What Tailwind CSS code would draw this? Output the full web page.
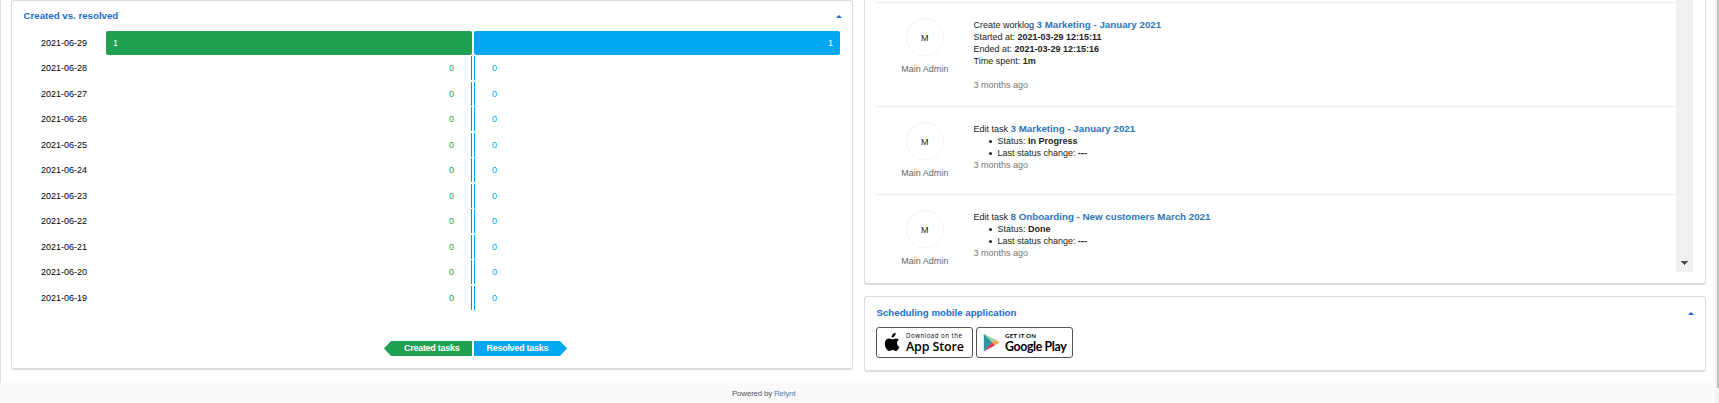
<!DOCTYPE html>
<html lang="en">
<head>
<meta charset="utf-8">
<title>Dashboard</title>
<script src="https://cdn.jsdelivr.net/npm/@tailwindcss/browser@4"></script>
</head>
<body class="h-[403px] overflow-hidden bg-white font-['Liberation_Sans',Arial,sans-serif] text-[9px] leading-3 text-[#222]">
<div class="flex h-[403px]">
  <div class="flex w-[1715px] flex-col">
    <main class="flex h-[383px] gap-[11px] border-l border-[#ddd] pl-[10px]">
      <section class="flex h-[370px] w-[842px] flex-col rounded-[3px] border border-b-2 border-[#ddd] px-3">
        <header class="flex h-[29.5px] items-center justify-between">
          <h2 class="-ml-[0.5px] text-[9.7px] font-bold text-[#1a6dcc]">Created vs. resolved</h2>
          <svg class="-mr-[2px] mt-[2px] h-[3px] w-[6px]" viewBox="0 0 6 3"><path d="M0 3 3 0l3 3z" fill="#1a6dcc"/></svg>
        </header>
        <div id="chart" class="flex flex-col gap-[1.5px] text-black"></div>
        <div class="mt-[31.5px] flex h-[15px] gap-[2px] pl-[360px] font-bold leading-[14px] tracking-[-0.28px] text-white">
          <div class="w-[88px] bg-[#1fa14f] pl-[20px] [clip-path:polygon(0_50%,7px_0,100%_0,100%_100%,7px_100%)]">Created tasks</div>
          <div class="w-[93px] bg-[#02a7f2] pl-[12.5px] [clip-path:polygon(0_0,86px_0,100%_50%,86px_100%,0_100%)]">Resolved tasks</div>
        </div>
      </section>

      <div class="flex w-[842px] flex-col gap-[11px]">
        <section class="flex h-[285px] rounded-b-[3px] border-x border-b-2 border-[#ddd] pl-[11px]">
          <div class="w-[800px] pt-[2px]">
            <article class="flex h-[104px] border-t border-[#eee] pt-[15px]">
              <div class="flex w-[97.5px] flex-col items-center">
                <div class="flex h-[38px] w-[38px] items-center justify-center rounded-full border border-[#f3f3f3] pt-px">M</div>
                <div class="mt-[7px] text-[#666]">Main Admin</div>
              </div>
              <div class="pt-px">
                <div>Create worklog <b class="text-[9.75px] text-[#2e75b6]">3 Marketing - January 2021</b></div>
                <div>Started at: <b>2021-03-29 12:15:11</b></div>
                <div>Ended at: <b>2021-03-29 12:15:16</b></div>
                <div>Time spent: <b>1m</b></div>
                <div class="mt-3 text-[#777]">3 months ago</div>
              </div>
            </article>
            <article class="flex h-[88px] border-t border-[#eee] pt-[15px]">
              <div class="flex w-[97.5px] flex-col items-center">
                <div class="flex h-[38px] w-[38px] items-center justify-center rounded-full border border-[#f3f3f3] pt-px">M</div>
                <div class="mt-[7px] text-[#666]">Main Admin</div>
              </div>
              <div class="pt-px">
                <div>Edit task <b class="text-[9.75px] text-[#2e75b6]">3 Marketing - January 2021</b></div>
                <div class="flex items-center pl-[15px]"><i class="mr-[6px] size-[3px] rounded-full bg-[#222]"></i><span>Status: <b>In Progress</b></span></div>
                <div class="flex items-center pl-[15px]"><i class="mr-[6px] size-[3px] rounded-full bg-[#222]"></i><span>Last status change: <b>---</b></span></div>
                <div class="text-[#777]">3 months ago</div>
              </div>
            </article>
            <article class="flex h-[88px] border-t border-[#eee] pt-[15px]">
              <div class="flex w-[97.5px] flex-col items-center">
                <div class="flex h-[38px] w-[38px] items-center justify-center rounded-full border border-[#f3f3f3] pt-px">M</div>
                <div class="mt-[7px] text-[#666]">Main Admin</div>
              </div>
              <div class="pt-px">
                <div>Edit task <b class="text-[9.75px] text-[#2e75b6]">8 Onboarding - New customers March 2021</b></div>
                <div class="flex items-center pl-[15px]"><i class="mr-[6px] size-[3px] rounded-full bg-[#222]"></i><span>Status: <b>Done</b></span></div>
                <div class="flex items-center pl-[15px]"><i class="mr-[6px] size-[3px] rounded-full bg-[#222]"></i><span>Last status change: <b>---</b></span></div>
                <div class="text-[#777]">3 months ago</div>
              </div>
            </article>
          </div>
          <div class="flex h-[272px] w-[17px] items-end justify-center bg-[#f0f0f0] pb-[7px]">
            <svg class="h-[4px] w-[7px]" viewBox="0 0 7 4" shape-rendering="crispEdges"><path d="M0 0h7v1H6v1H5v1H4v1H3V3H2V2H1V1H0z" fill="#505050"/></svg>
          </div>
        </section>

        <section class="h-[76px] rounded-[3px] border border-b-2 border-[#ddd] pl-[11px] pr-[11px]">
          <header class="flex h-[30px] items-center justify-between pt-[2px]">
            <h2 class="pl-[0.5px] text-[9.7px] font-bold text-[#1a6dcc]">Scheduling mobile application</h2>
            <svg class="h-[3px] w-[6px]" viewBox="0 0 6 3"><path d="M0 3 3 0l3 3z" fill="#1a6dcc"/></svg>
          </header>
          <div class="flex gap-[3px] font-['Open_Sans',sans-serif] text-black">
            <a class="flex h-[31px] w-[97px] rounded-[3px] border border-[#555] pl-[7px]">
              <svg class="mt-[4px] h-[20px] w-[16px]" viewBox="0 0 16 20"><path d="M11.6.8c.2 1.4-.4 2.600-1.100 3.400-.7.9-1.800 1.500-2.800 1.400-.2-1.300.4-2.600 1.100-3.300C9.500 1.500 10.700.9 11.600.8zM15 7.800c-1.300.8-2.100 1.900-2 3.400 0 1.700 1 2.900 2.400 3.500-.7 2-1.900 4.100-3.500 4.200-1.300 0-1.700-.8-3.300-.8s-2.100.8-3.300.8C3.200 18.900.8 15 .8 11.500.8 8.200 2.900 6.400 5 6.400c1.400 0 2.500.9 3.400.9.8 0 2.200-1 3.900-.9 1 .1 2 .5 2.700 1.400z" fill="#000"/></svg>
              <div class="pl-[6px] pt-[3px]">
                <div class="h-[9px] whitespace-nowrap text-[6.2px] font-medium leading-[10px] tracking-[0.46px]">Download on the</div>
                <div class="whitespace-nowrap text-[12.500px] font-semibold leading-[13px] tracking-[-0.15px]">App Store</div>
              </div>
            </a>
            <a class="flex h-[31px] w-[97px] rounded-[3px] border border-[#555] pl-[6px]">
              <svg class="mt-[5px] h-[19px] w-[17px]" viewBox="0 0 17 19"><path d="M.8.8 9.500 9.500.8 18.400z" fill="#2d94a2"/><path d="M.8.8 12 6.600 9.200 9.500z" fill="#8ed6a4"/><path d="M.8 18.400 9.200 9.300l2.800 3z" fill="#d8334f"/><path d="m12 6.600 4.800 2.900L12 12.300 9.200 9.500z" fill="#f5a45c"/></svg>
              <div class="pl-[5px] pt-[3px]">
                <div class="h-[9px] whitespace-nowrap font-['Lato',sans-serif] text-[6.2px] font-bold leading-[9px] tracking-[0.15px]">GET IT ON</div>
                <div class="whitespace-nowrap font-['Lato',sans-serif] text-[12.300px] font-bold leading-[14px] tracking-[-0.35px]">Google Play</div>
              </div>
            </a>
          </div>
        </section>
      </div>
    </main>
    <footer class="flex h-[20px] items-center bg-[#fafafa] pl-[732px] pt-px text-[8px] tracking-[-0.22px] text-[#555]"><span>Powered by <a class="text-[#4a80b5]">Relynt</a></span></footer>
  </div>
  <div class="h-[403px] w-[4px] bg-[#f1f1f1] pl-[2px]"><div class="h-[388px] w-[2px] bg-[#c1c1c1]"></div></div>
</div>
<script>
  const chart = document.getElementById('chart');
  for (let day = 29; day >= 19; day--) {
    const full = day === 29;
    const left = full
      ? '<div class="h-full w-[366px] shrink-0 rounded-[2px] bg-[#1fa14f] pl-[7px] text-white">1</div>'
      : '<div class="flex h-full w-[366px] shrink-0 justify-end border-r border-[#1fa14f] pr-[17px] text-[#1fa14f]">0</div>';
    const right = full
      ? '<div class="flex h-full w-[366px] shrink-0 justify-end rounded-[2px] bg-[#02a7f2] pr-[7px] text-white">1</div>'
      : '<div class="h-full w-[366px] shrink-0 border-l border-[#02a7f2] pl-[17px] text-[#02a7f2]">0</div>';
    chart.insertAdjacentHTML('beforeend',
      `<div class="flex h-[24px] gap-[2px] leading-[24px]"><div class="w-[80px] shrink-0 pl-[17px]">2021-06-${day}</div>${left}${right}</div>`);
  }
</script>
</body>
</html>
